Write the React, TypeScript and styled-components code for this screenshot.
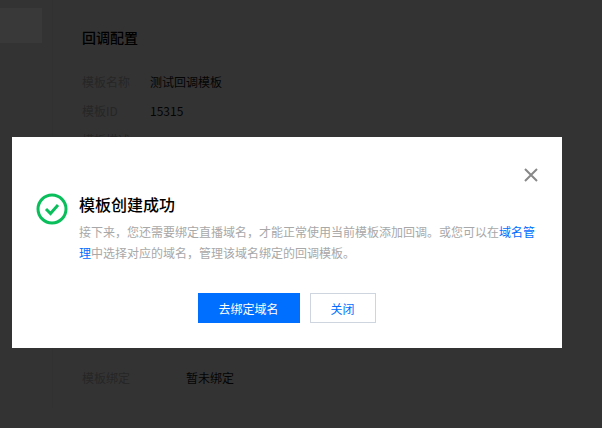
import React from 'react';
import styled, { createGlobalStyle } from 'styled-components';

const GlobalStyle = createGlobalStyle`
  html, body {
    margin: 0;
    padding: 0;
    height: 100%;
    overflow: hidden;
  }
  body {
    font-family: "Noto Sans CJK SC", "Liberation Sans", sans-serif;
    font-size: 12px;
  }
`;

const Page = styled.div`
  display: flex;
  width: 602px;
  height: 428px;
  background: #cccccc;
`;

const Sidebar = styled.aside`
  box-sizing: border-box;
  width: 53px;
  height: 408px;
  padding: 8px 10px 0 0;
  border-right: 1px solid #c2c2c2;
`;

const SideItem = styled.div`
  height: 35px;
  background: #e2e2e2;
`;

const Main = styled.main`
  display: flex;
  flex-direction: column;
  padding: 27px 0 0 29px;
`;

const SectionTitle = styled.h2`
  margin: 0 0 25px;
  font-size: 14px;
  line-height: 20px;
  font-weight: 500;
  color: #000;
`;

const Row = styled.div<{ $top?: number }>`
  display: flex;
  height: 29px;
  line-height: 20px;
  margin-top: ${(p) => p.$top ?? 0}px;
`;

const Label = styled.span<{ $width?: number }>`
  width: ${(p) => p.$width ?? 68}px;
  color: #969696;
`;

const Value = styled.span`
  color: #111;
`;

const Mask = styled.div`
  position: fixed;
  inset: 0;
  box-sizing: border-box;
  padding: 137px 0 0 12px;
  background: rgba(0, 0, 0, 0.75);
`;

const Dialog = styled.div`
  position: relative;
  box-sizing: border-box;
  width: 550px;
  height: 211px;
  padding: 55px 26px 0 25px;
  background: #fff;
`;

const CloseButton = styled.button`
  position: absolute;
  top: 31px;
  right: 24px;
  display: flex;
  padding: 0;
  border: 0;
  background: none;
`;

const Body = styled.div`
  display: flex;
  gap: 11px;
`;

const Check = styled.svg`
  flex: none;
  width: 32px;
  height: 32px;
  margin: 1px 0 0 -1px;
`;

const Heading = styled.h3`
  margin: 0 0 5px;
  font-size: 16px;
  line-height: 24px;
  font-weight: 500;
  color: #000;
`;

const Description = styled.p`
  margin: 0;
  font-size: 12px;
  line-height: 21px;
  color: #a8a8a8;
`;

const Link = styled.a`
  color: #006eff;
`;

const Footer = styled.div`
  display: flex;
  justify-content: center;
  gap: 10px;
  margin-top: 30px;
`;

const Button = styled.button<{ $primary?: boolean }>`
  box-sizing: border-box;
  width: ${(p) => (p.$primary ? 102 : 66)}px;
  height: 30px;
  padding: 0;
  font-family: inherit;
  font-size: 12px;
  border: 1px solid ${(p) => (p.$primary ? '#006eff' : '#cfd5de')};
  background: ${(p) => (p.$primary ? '#006eff' : '#fff')};
  color: ${(p) => (p.$primary ? '#fff' : '#006eff')};
`;

const App: React.FC = () => {
  return (
    <>
      <GlobalStyle />
      <Page>
        <Sidebar>
          <SideItem />
        </Sidebar>
        <Main>
          <SectionTitle>回调配置</SectionTitle>
          <Row>
            <Label>模板名称</Label>
            <Value>测试回调模板</Value>
          </Row>
          <Row>
            <Label>模板ID</Label>
            <Value>15315</Value>
          </Row>
          <Row>
            <Label>模板描述</Label>
          </Row>
          <Row $top={209}>
            <Label $width={104}>模板绑定</Label>
            <Value>暂未绑定</Value>
          </Row>
        </Main>
      </Page>
      <Mask>
        <Dialog>
          <CloseButton aria-label="关闭">
            <svg width="14" height="14" viewBox="0 0 14 14">
              <path d="M1 1L13 13M13 1L1 13" stroke="#888" strokeWidth="2" fill="none" />
            </svg>
          </CloseButton>
          <Body>
            <Check viewBox="0 0 32 32">
              <circle cx="16" cy="16" r="14" fill="none" stroke="#0abf5b" strokeWidth="3" />
              <path d="M10 16L14.5 20.5L22 12" fill="none" stroke="#0abf5b" strokeWidth="3" />
            </Check>
            <div>
              <Heading>模板创建成功</Heading>
              <Description>
                接下来，您还需要绑定直播域名，才能正常使用当前模板添加回调。或您可以在<Link>域名管理</Link>中选择对应的域名，管理该域名绑定的回调模板。
              </Description>
            </div>
          </Body>
          <Footer>
            <Button $primary>去绑定域名</Button>
            <Button>关闭</Button>
          </Footer>
        </Dialog>
      </Mask>
    </>
  );
};

export default App;
